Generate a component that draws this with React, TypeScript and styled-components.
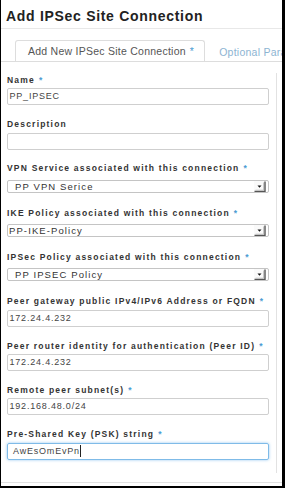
import React from "react";
import styled, { createGlobalStyle } from "styled-components";

const Global = createGlobalStyle`
  html, body { margin: 0; padding: 0; background: #fff; }
  * { box-sizing: border-box; }
  body { font-family: "Liberation Sans", Arial, sans-serif; }
`;

const Frame = styled.div`
  width: 285px;
  height: 488px;
  border-left: 1px solid #000;
  border-right: 3px solid #000;
  border-bottom: 2px solid #000;
  background: #fff;
  overflow: hidden;
  display: flex;
  flex-direction: column;
`;

const Header = styled.div`
  height: 29px;
  flex: none;
  border-bottom: 1px solid #e8e8e8;
  padding: 8px 0 0 5px;
`;

const Title = styled.h3`
  margin: 0;
  font-size: 14px;
  line-height: 16px;
  font-weight: 700;
  letter-spacing: 0.7px;
  color: #222;
  white-space: nowrap;
`;

const TabBar = styled.div`
  flex: none;
  display: flex;
  align-items: flex-end;
  padding: 10px 0 0 14px;
  height: 33px;
  border-bottom: 1px solid #ddd;
  white-space: nowrap;
  overflow: hidden;
`;

const Tab = styled.div<{ $active?: boolean }>`
  height: 22px;
  margin-bottom: -1px;
  padding: 0 ${(p) => (p.$active ? "10px 0 12px" : "0 0 13px")};
  display: flex;
  align-items: center;
  font-size: 10.5px;
  letter-spacing: 0.25px;
  border: 1px solid ${(p) => (p.$active ? "#ddd" : "transparent")};
  border-bottom: ${(p) => (p.$active ? "1px solid #fff" : "none")};
  border-radius: 3px 3px 0 0;
  background: #fff;
  color: ${(p) => (p.$active ? "#555" : "#8db4d2")};
  flex: none;
`;

const Star = styled.span`
  color: #4b9cd3;
  margin-left: 4px;
`;

const Body = styled.div`
  flex: none;
  display: flex;
  margin-top: 11px;
  height: 400px;
`;

const FormColumn = styled.div`
  width: 276px;
  border-right: 1px solid #e2e2e2;
  padding: 1.8px 0 0 6px;
  display: flex;
  flex-direction: column;
`;

const Group = styled.div`
  display: flex;
  flex-direction: column;
  margin-bottom: 13.8px;
`;

const Label = styled.label`
  display: block;
  font-size: 8.5px;
  line-height: 11px;
  height: 11px;
  font-weight: 700;
  letter-spacing: 1.2px;
  color: #333;
  margin-bottom: 2.5px;
  white-space: nowrap;
`;

const Input = styled.div<{ $focus?: boolean }>`
  width: 262px;
  height: 17px;
  border: 1px solid ${(p) => (p.$focus ? "#7fbbe8" : "#cfcfcf")};
  box-shadow: ${(p) => (p.$focus ? "0 0 3px rgba(102,175,233,0.7)" : "none")};
  border-radius: 2px;
  padding-left: ${(p) => (p.$focus ? "5px" : "1.5px")};
  font-size: 9px;
  line-height: 15px;
  letter-spacing: 0.8px;
  color: #444;
  display: flex;
  align-items: center;
  white-space: nowrap;
`;

const Caret = styled.span`
  display: inline-block;
  width: 1px;
  height: 12px;
  background: #222;
`;

const SelectSlot = styled.div`
  height: 17px;
  padding-top: 3px;
`;

const Select = styled.div<{ $indent: number }>`
  width: 262px;
  height: 13px;
  border: 1px solid #c4c4c4;
  border-radius: 2px;
  padding-left: ${(p) => p.$indent}px;
  display: flex;
  align-items: center;
  overflow: hidden;
`;

const SelectText = styled.span`
  flex: 1;
  font-size: 9.5px;
  line-height: 11px;
  height: 11px;
  letter-spacing: 1.1px;
  color: #333;
  white-space: pre;
  overflow: hidden;
`;

const ArrowBox = styled.span`
  flex: none;
  width: 12px;
  height: 11px;
  margin-right: 2px;
  display: flex;
`;

const Footer = styled.div`
  flex: 1;
  margin-top: 9px;
  border-top: 1px solid #e2e2e2;
`;

const Arrow = () => (
  <ArrowBox>
    <svg width="12" height="11" viewBox="0 0 12 11">
      <rect x="0" y="0" width="12" height="11" fill="#fafafa" />
      <path d="M11 0.5 V10.5 H0.5" stroke="#555" strokeWidth="1.4" fill="none" />
      <path d="M9.5 1.5 V9.2 H1.5" stroke="#bbb" strokeWidth="0.8" fill="none" />
      <path d="M3.5 4.5 H7.5 L5.5 6.8 Z" fill="#111" />
    </svg>
  </ArrowBox>
);

type Field =
  | { kind: "input"; label: string; req?: boolean; value: string; focus?: boolean }
  | { kind: "select"; label: string; req?: boolean; value: string; indent: number };

const fields: Field[] = [
  { kind: "input", label: "Name", req: true, value: "PP_IPSEC" },
  { kind: "input", label: "Description", value: "" },
  { kind: "select", label: "VPN Service associated with this connection", req: true, value: "PP VPN Serice", indent: 7 },
  { kind: "select", label: "IKE Policy associated with this connection", req: true, value: "PP-IKE-Policy", indent: 1 },
  { kind: "select", label: "IPSec Policy associated with this connection", req: true, value: "PP IPSEC Policy", indent: 7 },
  { kind: "input", label: "Peer gateway public IPv4/IPv6 Address or FQDN", req: true, value: "172.24.4.232" },
  { kind: "input", label: "Peer router identity for authentication (Peer ID)", req: true, value: "172.24.4.232" },
  { kind: "input", label: "Remote peer subnet(s)", req: true, value: "192.168.48.0/24" },
  { kind: "input", label: "Pre-Shared Key (PSK) string", req: true, value: "AwEsOmEvPn", focus: true },
];

export default function App() {
  return (
    <>
      <Global />
      <Frame>
        <Header>
          <Title>Add IPSec Site Connection</Title>
        </Header>
        <TabBar>
          <Tab $active>
            Add New IPSec Site Connection<Star>*</Star>
          </Tab>
          <Tab>Optional Parameters</Tab>
        </TabBar>
        <Body>
          <FormColumn>
            {fields.map((f) => (
              <Group key={f.label}>
                <Label>
                  {f.label}
                  {f.req && <Star>*</Star>}
                </Label>
                {f.kind === "input" ? (
                  <Input $focus={f.focus}>
                    {f.value}
                    {f.focus && <Caret />}
                  </Input>
                ) : (
                  <SelectSlot>
                    <Select $indent={f.indent}>
                      <SelectText>{f.value}</SelectText>
                      <Arrow />
                    </Select>
                  </SelectSlot>
                )}
              </Group>
            ))}
          </FormColumn>
        </Body>
        <Footer />
      </Frame>
    </>
  );
}
